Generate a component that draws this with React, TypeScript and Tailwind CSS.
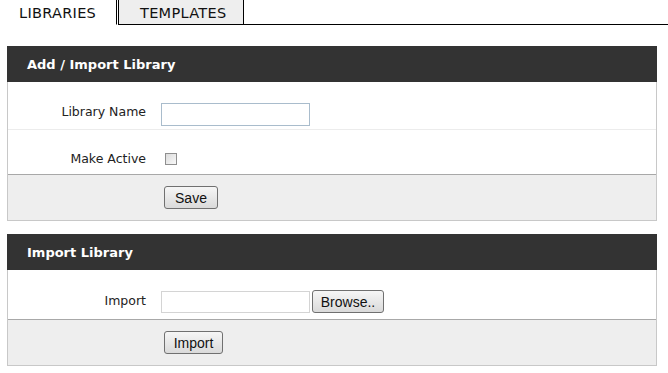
import React from 'react';

const labelFont = { fontFamily: '"DejaVu Sans", Verdana, sans-serif' };

const Btn: React.FC<{ children: React.ReactNode; w: string }> = ({ children, w }) => (
  <button
    className={`${w} h-[23px] border border-[#707070] rounded-[3px] bg-gradient-to-b from-[#f6f6f6] to-[#dadada] text-[14px] text-[#111] font-['Liberation_Sans',Arial,sans-serif] leading-none`}
  >
    {children}
  </button>
);

const PanelHeader: React.FC<{ title: string }> = ({ title }) => (
  <div className="h-[36px] bg-[#333333] text-white text-[13px] font-bold flex items-center pl-[20px] pt-[2px]" style={labelFont}>
    {title}
  </div>
);

export default function App() {
  return (
    <div className="w-[668px] h-[373px] bg-white overflow-hidden" style={labelFont}>
      {/* tabs */}
      <div className="flex h-[25px] text-[14.5px] text-[#111]">
        <div className="w-[116px] pl-[19px] pt-[3px] tracking-[0.3px]">LIBRARIES</div>
        <div className="w-[2px] border-l border-black border-b border-b-white" />
        <div className="w-[126px] border-l border-r border-b border-black bg-[#eeeeee] pl-[21px] pt-[3px] tracking-[0.3px]">TEMPLATES</div>
        <div className="flex-1 border-b border-black" />
      </div>

      {/* add / import library */}
      <div className="ml-[7px] mt-[21px] w-[650px]">
        <PanelHeader title="Add / Import Library" />
        <div className="border-x border-b border-[#c8c8c8]">
          <div className="h-[48px] flex items-center border-b border-[#ececec] pt-[13px]">
            <div className="w-[138px] text-right text-[12.5px] text-[#222]">Library Name</div>
            <input
              type="text"
              className="ml-[15px] mt-[4px] w-[149px] h-[23px] border border-[#a9bccc] bg-white outline-none"
            />
          </div>
          <div className="h-[44px] flex items-center pt-[14px]">
            <div className="w-[138px] text-right text-[12.5px] text-[#222]">Make Active</div>
            <div className="ml-[19px] w-[12px] h-[12px] border border-[#8f8f8f] bg-gradient-to-br from-[#dcdcdc] to-[#f8f8f8]" />
          </div>
          <div className="h-[46px] flex items-center bg-[#eeeeee] border-t border-[#a8a8a8] pl-[156px]">
            <Btn w="w-[54px]">Save</Btn>
          </div>
        </div>
      </div>

      {/* import library */}
      <div className="ml-[7px] mt-[13px] w-[650px]">
        <PanelHeader title="Import Library" />
        <div className="border-x border-b border-[#c8c8c8]">
          <div className="h-[49px] flex items-center pt-[14px]">
            <div className="w-[138px] text-right text-[12.5px] text-[#222]">Import</div>
            <input
              type="text"
              className="ml-[15px] w-[149px] h-[22px] border border-[#d4d4d4] bg-white outline-none"
            />
            <div className="ml-[2px]">
              <Btn w="w-[72px]">Browse..</Btn>
            </div>
          </div>
          <div className="h-[46px] flex items-center bg-[#eeeeee] border-t border-[#a8a8a8] pl-[156px]">
            <Btn w="w-[59px]">Import</Btn>
          </div>
        </div>
      </div>
    </div>
  );
}
